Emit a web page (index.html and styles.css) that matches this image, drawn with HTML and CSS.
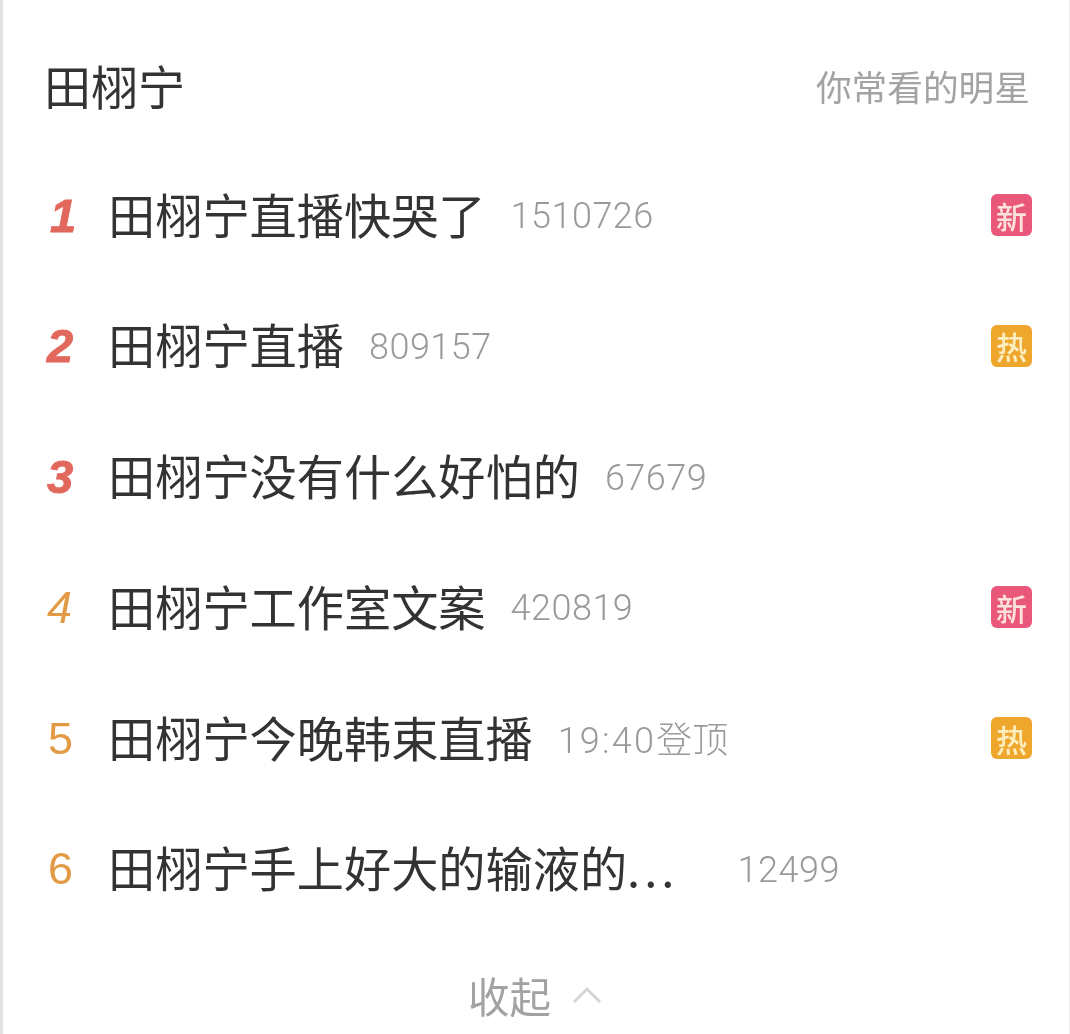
FILE: index.html
```html
<!DOCTYPE html>
<html lang="zh-CN">
<head>
<meta charset="utf-8">
<title>田栩宁</title>
<link rel="stylesheet" href="styles.css">
</head>
<body>
<main class="card">
  <header class="head">
    <h1 class="title">田栩宁</h1>
    <span class="sub">你常看的明星</span>
  </header>
  <ul class="list">
    <li class="row">
      <span class="rank rank-top one">1</span>
      <span class="name">田栩宁直播快哭了</span>
      <span class="count">1510726</span>
      <span class="tag tag-new">新</span>
    </li>
    <li class="row">
      <span class="rank rank-top">2</span>
      <span class="name">田栩宁直播</span>
      <span class="count">809157</span>
      <span class="tag tag-hot">热</span>
    </li>
    <li class="row">
      <span class="rank rank-top">3</span>
      <span class="name">田栩宁没有什么好怕的</span>
      <span class="count">67679</span>
    </li>
    <li class="row">
      <span class="rank rank-low">4</span>
      <span class="name">田栩宁工作室文案</span>
      <span class="count">420819</span>
      <span class="tag tag-new">新</span>
    </li>
    <li class="row">
      <span class="rank rank-low up">5</span>
      <span class="name">田栩宁今晚韩束直播</span>
      <span class="count"><span class="time">19:40</span><span class="count-cn">登顶</span></span>
      <span class="tag tag-hot">热</span>
    </li>
    <li class="row">
      <span class="rank rank-low up">6</span>
      <span class="name name-long">田栩宁手上好大的输液的<span class="dots">...</span></span>
      <span class="count">12499</span>
    </li>
  </ul>
  <footer class="more">
    <span class="more-text">收起</span>
    <svg class="chevron" width="28" height="18" viewBox="0 0 28 18" aria-hidden="true"><path d="M1 16 L14 3 L27 16" fill="none" stroke="#d4d4d4" stroke-width="3"/></svg>
  </footer>
</main>
</body>
</html>
```
FILE: styles.css
```css
* { box-sizing: border-box; }
html, body { margin: 0; padding: 0; background: #fff; }
body {
  width: 1070px;
  height: 1034px;
  overflow: hidden;
  font-family: "Noto Sans CJK SC", "Noto Sans", sans-serif;
}
.card {
  height: 1034px;
  padding: 0 38px 0 44px;
  border-left: 3px solid #e2e2e2;
  border-right: 1px solid #efefef;
  display: flex;
  flex-direction: column;
  filter: blur(0.45px);
}
.head {
  height: 150px;
  padding-top: 53px;
  display: flex;
  justify-content: space-between;
  align-items: flex-start;
}
.title {
  margin: 0 0 0 -3px;
  font-size: 47px;
  line-height: 64px;
  font-weight: 400;
  color: #333;
}
.sub {
  font-size: 35.7px;
  line-height: 64px;
  margin-top: 1px;
  margin-right: 1px;
  color: #a3a3a3;
}
.list {
  list-style: none;
  margin: 0;
  padding: 0;
}
.row {
  height: 130.7px;
  display: flex;
  align-items: center;
}
.rank {
  width: 63px;
  margin-left: -2px;
  padding-left: 2px;
  flex: none;
  font-family: "Liberation Sans", sans-serif;
  font-style: italic;
  line-height: 1;
  text-align: left;
}
.rank-top {
  color: #e2685d;
  font-weight: 700;
  font-size: 47px;
  -webkit-text-stroke: 1px #e2685d;
}
.rank-top.one { padding-left: 5px; }
.rank-low { color: #e39a45; font-weight: 400; font-size: 45px; }
.rank-low.up { font-style: normal; padding-left: 3px; }
.name {
  font-size: 47.2px;
  line-height: 64px;
  padding-bottom: 3px;
  color: #333;
  white-space: nowrap;
}
.name-long { width: 606px; flex: none; }
.dots { letter-spacing: 4px; }
.count {
  margin-left: 25px;
  padding-top: 2px;
  font-family: Roboto, sans-serif;
  font-weight: 300;
  font-size: 36px;
  letter-spacing: 0.5px;
  line-height: 48px;
  color: #9a9a9a;
  white-space: nowrap;
}
.name-long + .count { margin-left: 23.5px; }
.time { letter-spacing: 2.2px; }
.count-cn { font-family: "Noto Sans CJK SC", sans-serif; font-size: 36px; letter-spacing: 0; }
.tag {
  margin-left: auto;
  margin-right: -1px;
  width: 41px;
  height: 42px;
  border-radius: 6px;
  display: flex;
  align-items: center;
  justify-content: center;
  font-size: 31px;
  font-weight: 500;
  line-height: 1;
  color: #fde3dc;
}
.tag-new { background: #e9577a; }
.tag-hot { background: #eea62c; color: #fdeec0; }
.more {
  height: 100px;
  padding-top: 21px;
  display: flex;
  justify-content: center;
  align-items: center;
  gap: 22px;
}
.more-text {
  font-size: 41.5px;
  line-height: 56px;
  margin-left: -9px;
  color: #a2a2a2;
}
.chevron { flex: none; }
```
